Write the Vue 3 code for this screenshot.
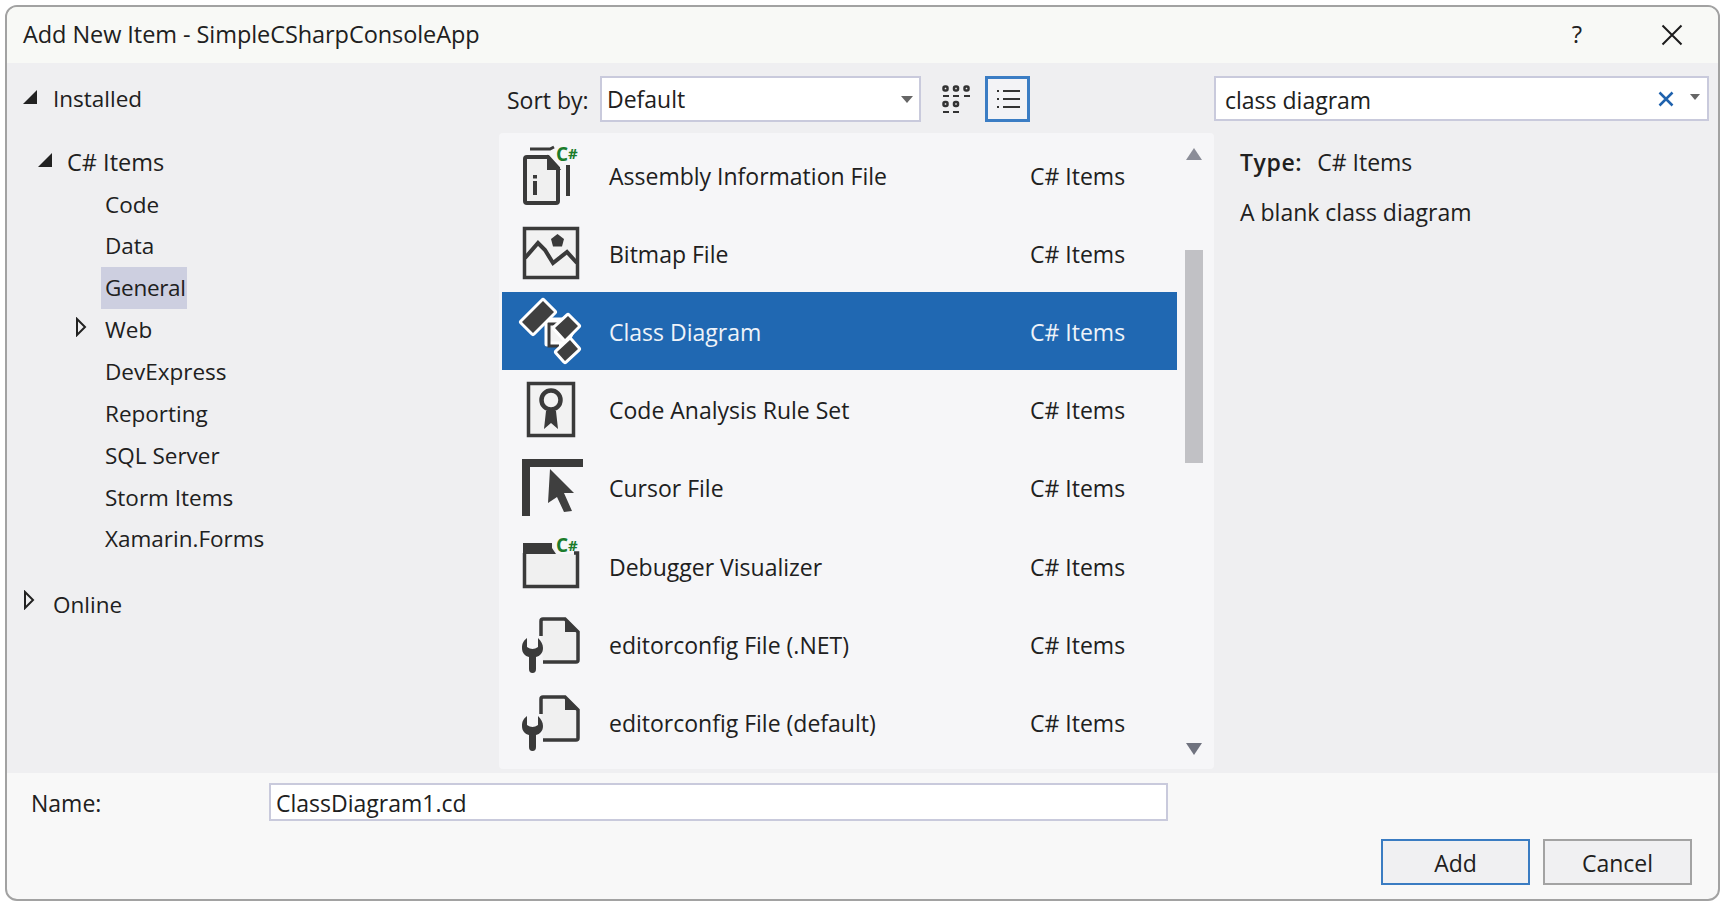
<script setup>
const tree = [
  { label: 'Code' },
  { label: 'Data' },
  { label: 'General', selected: true },
  { label: 'Web', arrow: true },
  { label: 'DevExpress' },
  { label: 'Reporting' },
  { label: 'SQL Server' },
  { label: 'Storm Items' },
  { label: 'Xamarin.Forms' }
]
const items = [
  { name: 'Assembly Information File', icon: 'assembly' },
  { name: 'Bitmap File', icon: 'bitmap' },
  { name: 'Class Diagram', icon: 'classd', selected: true },
  { name: 'Code Analysis Rule Set', icon: 'rule' },
  { name: 'Cursor File', icon: 'cursor' },
  { name: 'Debugger Visualizer', icon: 'debug' },
  { name: 'editorconfig File (.NET)', icon: 'config' },
  { name: 'editorconfig File (default)', icon: 'config' }
]
</script>

<template>
  <div class="dialog">
    <header class="title">
      <span class="title-text">Add New Item - SimpleCSharpConsoleApp</span>
      <span class="help">?</span>
      <svg class="close" width="22" height="22" viewBox="0 0 22 22"><path d="M1.5 1.5 20.5 20.5M20.5 1.5 1.5 20.5" stroke="#1c1c1c" stroke-width="2" fill="none"/></svg>
    </header>

    <main class="main">
      <nav class="tree">
        <div class="node top">
          <svg class="tw" width="16" height="16" viewBox="0 0 16 16"><path d="M1 15H15V1Z" fill="#222"/></svg>
          <span>Installed</span>
        </div>
        <div class="node cs">
          <svg class="tw" width="16" height="16" viewBox="0 0 16 16"><path d="M1 15H15V1Z" fill="#222"/></svg>
          <span>C# Items</span>
        </div>
        <div v-for="n in tree" :key="n.label" class="node leaf">
          <svg v-if="n.arrow" class="tw-open" width="12" height="20" viewBox="0 0 12 20"><path d="M2 2 10 10 2 18Z" fill="none" stroke="#222" stroke-width="2"/></svg>
          <span class="leaf-label" :class="{ sel: n.selected }">{{ n.label }}</span>
        </div>
        <div class="node online">
          <svg class="tw-online" width="12" height="20" viewBox="0 0 12 20"><path d="M2 2 10 10 2 18Z" fill="none" stroke="#222" stroke-width="2"/></svg>
          <span>Online</span>
        </div>
      </nav>

      <section class="center">
        <div class="toolbar">
          <span class="sort">Sort by:</span>
          <div class="combo">
            <span>Default</span>
            <svg width="12" height="7" viewBox="0 0 12 7"><path d="M0 0H12L6 7Z" fill="#666"/></svg>
          </div>
          <svg class="grid-ic" width="32" height="32" viewBox="0 0 32 32" fill="none" stroke="#333">
            <rect x="2.5" y="2.5" width="4" height="4" rx="1.5" stroke-width="2.5"/><rect x="13" y="2.5" width="4" height="4" rx="1.5" stroke-width="2.5"/><rect x="23.5" y="2.5" width="4" height="4" rx="1.5" stroke-width="2.5"/>
            <path d="M2 12H8M12 12H18M23 12H29" stroke-width="2"/>
            <rect x="2.5" y="18" width="4" height="4" rx="1.5" stroke-width="2.5"/><rect x="13" y="18" width="4" height="4" rx="1.5" stroke-width="2.5"/>
            <path d="M2 28H8M12 28H18" stroke-width="2"/>
          </svg>
          <div class="list-btn">
            <svg width="24" height="26" viewBox="0 0 24 26" fill="none" stroke="#333" stroke-width="2">
              <path d="M1 5H3M7 5H24M1 13H3M7 13H24M1 21H3M7 21H24"/>
            </svg>
          </div>
        </div>

        <div class="list">
          <div class="rows">
            <div v-for="it in items" :key="it.name" class="row" :class="{ active: it.selected }">
              <svg class="ic" width="66" height="78" viewBox="0 -6 66 78">
                <g v-if="it.icon === 'assembly'">
                  <path d="M7 17Q7 15 9 15H30L40 26V59Q40 61 38 61H9Q7 61 7 59Z" fill="#f0f0f0" stroke="#3a3a3a" stroke-width="4"/>
                  <path d="M30 15V27H41Z" fill="#3a3a3a" stroke="#3a3a3a" stroke-width="2"/>
                  <path d="M12 7H32L36 5" fill="none" stroke="#3a3a3a" stroke-width="3"/>
                  <path d="M50 23V54" stroke="#3a3a3a" stroke-width="4"/>
                  <rect x="15" y="33" width="4" height="3.5" fill="#3a3a3a"/><rect x="15" y="39" width="4" height="14" fill="#3a3a3a"/>
                  <text x="38" y="19" class="cs-mark">C<tspan class="cs-hash" dy="-2">#</tspan></text>
                </g>
                <g v-else-if="it.icon === 'bitmap'">
                  <rect x="6.500" y="8.500" width="53" height="49" fill="#f2f2f2" stroke="#3a3a3a" stroke-width="3.500"/>
                  <path d="M7 38 20 23 27 30 35 43 49 32 59 43" fill="none" stroke="#3a3a3a" stroke-width="4"/>
                  <path d="M39.500 14 46 19 44 26.500H35L33 19Z" fill="#3a3a3a"/>
                </g>
                <g v-else-if="it.icon === 'classd'">
                  <path d="M29 22H48L56 30 48 46H29Z" fill="#f4f4f4" stroke="#fff" stroke-width="5" stroke-linejoin="round"/>
                  <path d="M44 26H31V48H41" fill="none" stroke="#3a3a3a" stroke-width="3"/>
                  <path d="M25 3 36 14 15 35 4 24Z M50 18 60 28 47 41 37 30Z M52 42 60 51 47 63 39 54Z" fill="#3f3f3f" stroke="#fff" stroke-width="6" stroke-linejoin="round" paint-order="stroke"/>
                </g>
                <g v-else-if="it.icon === 'rule'">
                  <rect x="10.500" y="7.500" width="45" height="52" fill="#f2f2f2" stroke="#3a3a3a" stroke-width="3.500"/>
                  <circle cx="33" cy="24" r="9.500" fill="#f2f2f2" stroke="#3a3a3a" stroke-width="4.500"/>
                  <path d="M28 35 26 53 33 47 40 53 38 35Z" fill="#3a3a3a"/>
                </g>
                <g v-else-if="it.icon === 'cursor'">
                  <path d="M8 62V9H65" fill="none" stroke="#3a3a3a" stroke-width="8"/>
                  <path d="M32 15 56 39H46L54 57 46 58 39 43 30 49Z" fill="#3f3f3f"/>
                </g>
                <g v-else-if="it.icon === 'debug'">
                  <path d="M6.500 10V53.500H59.500V21H39L35 11Z" fill="#f0f0f0"/>
                  <path d="M5 10H34V15L38 21H5Z" fill="#3a3a3a"/>
                  <path d="M6.500 20V53.500H59.500V20H56" fill="none" stroke="#3a3a3a" stroke-width="3.500"/>
                  <text x="38" y="19" class="cs-mark">C<tspan class="cs-hash" dy="-1">#</tspan></text>
                </g>
                <g v-else>
                  <path d="M23 25V10Q23 8 25 8H47L60 21V49Q60 51 58 51H25" fill="#f0f0f0" stroke="#3a3a3a" stroke-width="3.500"/>
                  <path d="M47 9V21H60Z" fill="#3a3a3a"/>
                  <path d="M9 27C5 30 4 33 4 37 4 42 7 45 11 46V58Q11 62 14.500 62 18 62 18 58V46C22 45 25 42 25 37 25 33 23 30 20 27V36Q14.500 40 9 36Z" fill="#3a3a3a"/>
                </g>
              </svg>
              <span class="name">{{ it.name }}</span>
              <span class="cat">C# Items</span>
            </div>
          </div>
          <div class="scroll">
            <svg width="16" height="12" viewBox="0 0 16 12"><path d="M0 12H16L8 0Z" fill="#8b8d98"/></svg>
            <div class="thumb"></div>
            <svg class="down" width="16" height="12" viewBox="0 0 16 12"><path d="M0 0H16L8 12Z" fill="#70737f"/></svg>
          </div>
        </div>
      </section>

      <aside class="side">
        <div class="search">
          <span class="q">class diagram</span>
          <svg width="16" height="16" viewBox="0 0 16 16"><path d="M1.500 1.500 14.500 14.500M14.500 1.500 1.500 14.500" stroke="#1f62ad" stroke-width="2.500"/></svg>
          <svg class="caret" width="10" height="6" viewBox="0 0 10 6"><path d="M0 0H10L5 6Z" fill="#666"/></svg>
        </div>
        <div class="details">
          <div class="type"><b>Type:</b><span>C# Items</span></div>
          <div class="desc">A blank class diagram</div>
        </div>
      </aside>
    </main>

    <footer class="foot">
      <div class="name-row">
        <label>Name:</label>
        <div class="name-input">ClassDiagram1.cd</div>
      </div>
      <div class="buttons">
        <div class="btn primary">Add</div>
        <div class="btn cancel">Cancel</div>
      </div>
    </footer>
  </div>
</template>

<style>
html, body { margin: 0; background: #fff; }
</style>

<style scoped>
.dialog {
  box-sizing: border-box;
  width: 1715px;
  height: 896px;
  margin: 5px 0 0 5px;
  border: 2px solid #a2a2a2;
  border-radius: 12px;
  overflow: hidden;
  display: flex;
  flex-direction: column;
  background: #f8f8f8;
  font-family: "Open Sans", "Noto Sans", sans-serif;
  font-size: 23px;
  color: #202020;
}
.title {
  height: 56px;
  flex: none;
  display: flex;
  align-items: center;
  padding-left: 16px;
  background: #f8f9f6;
}
.title-text { flex: 1; font-size: 23.5px; letter-spacing: -0.07px; margin-bottom: 2px; }
.help { font-size: 24px; margin: 0 79px 4px 0; color: #222; }
.close { margin-right: 35px; }

.main { height: 710px; flex: none; display: flex; background: #efeff1; }

.tree { width: 492px; flex: none; box-sizing: border-box; padding-top: 15px; font-size: 22.5px; }
.node { height: 41.85px; display: flex; align-items: center; position: relative; }
.top { padding-left: 46px; margin-bottom: 21px; }
.cs { padding-left: 60px; font-size: 23.5px; margin-bottom: 1px; }
.leaf { padding-left: 94px; }
.leaf-label { display: block; line-height: 42px; padding: 0 0 0 4px; }
.leaf-label.sel { background: #cdcfe0; letter-spacing: -0.3px; padding-right: 1px; }
.online { padding-left: 46px; margin-top: 23px; }
.tw { position: absolute; left: 15px; top: 11px; }
.cs .tw { left: 30px; top: 11px; }
.tw-open { position: absolute; left: 68px; top: 8px; }
.tw-online { position: absolute; left: 16px; top: 7px; }

.center { width: 715px; flex: none; display: flex; flex-direction: column; }
.toolbar { height: 70px; flex: none; box-sizing: border-box; padding: 13px 0 0 8px; display: flex; align-items: flex-start; }
.sort { width: 93px; line-height: 48px; }
.combo {
  box-sizing: border-box;
  width: 321px;
  height: 46px;
  background: #fff;
  border: 2px solid #c9cadc;
  display: flex;
  align-items: center;
  justify-content: space-between;
  padding: 0 6px 0 5px;
}
.grid-ic { margin: 8px 0 0 20px; }
.list-btn {
  box-sizing: border-box;
  width: 45px;
  height: 46px;
  margin-left: 12px;
  border: 3px solid #3b7dc4;
  background: #f3f3f6;
  display: flex;
  align-items: center;
  justify-content: center;
}

.list { height: 636px; flex: none; display: flex; background: #f6f6f8; border-radius: 4px; box-sizing: border-box; padding-top: 3px; }
.rows { width: 675px; margin-left: 3px; flex: none; }
.row { height: 78.1px; display: flex; align-items: center; padding-left: 16px; box-sizing: border-box; }
.row.active { background: #2068b2; color: #eef3f9; }
.ic { flex: none; }
.name { width: 421px; margin-left: 25px; flex: none; padding-top: 2px; }
.cat { padding-top: 2px; }
.cs-mark { font: 700 19px "Open Sans", sans-serif; fill: #1b7c2c; }
.cs-hash { font-size: 15px; }

.scroll { width: 22px; margin-left: 6px; display: flex; flex-direction: column; align-items: center; padding: 12px 0 14px; box-sizing: border-box; height: 633px; }
.thumb { width: 18px; height: 213px; margin-top: 90px; background: #c1c1c5; }
.down { margin-top: auto; }

.side { flex: 1; min-width: 0; padding-top: 13px; }
.search {
  box-sizing: border-box;
  width: 495px;
  height: 45px;
  background: #fff;
  border: 2px solid #c9cadc;
  display: flex;
  align-items: center;
  padding: 0 7px 0 9px;
}
.q { flex: 1; padding-top: 2px; }
.caret { margin-left: 16px; margin-bottom: 3px; }
.details { padding: 19px 0 0 26px; }
.type { display: flex; gap: 15px; height: 44px; align-items: center; }
.type b { font-weight: 600; letter-spacing: 0.6px; }
.desc { height: 44px; margin-top: 6px; display: flex; align-items: center; }

.foot { flex: 1; min-height: 0; box-sizing: border-box; padding: 9px 26px 0 24px; }
.name-row { display: flex; align-items: center; height: 39px; }
.name-row label { width: 238px; padding-top: 2px; }
.name-input {
  box-sizing: border-box;
  width: 899px;
  height: 38px;
  background: #fff;
  border: 2px solid #c9cadc;
  padding-left: 5px;
  line-height: 36px;
}
.buttons { display: flex; justify-content: flex-end; gap: 13px; margin-top: 18px; }
.btn { box-sizing: border-box; width: 149px; height: 46px; padding-top: 2px; display: flex; align-items: center; justify-content: center; background: #f0f0f2; }
.primary { border: 2px solid #3a7cc2; }
.cancel { border: 2px solid #a3a3a3; }
</style>
